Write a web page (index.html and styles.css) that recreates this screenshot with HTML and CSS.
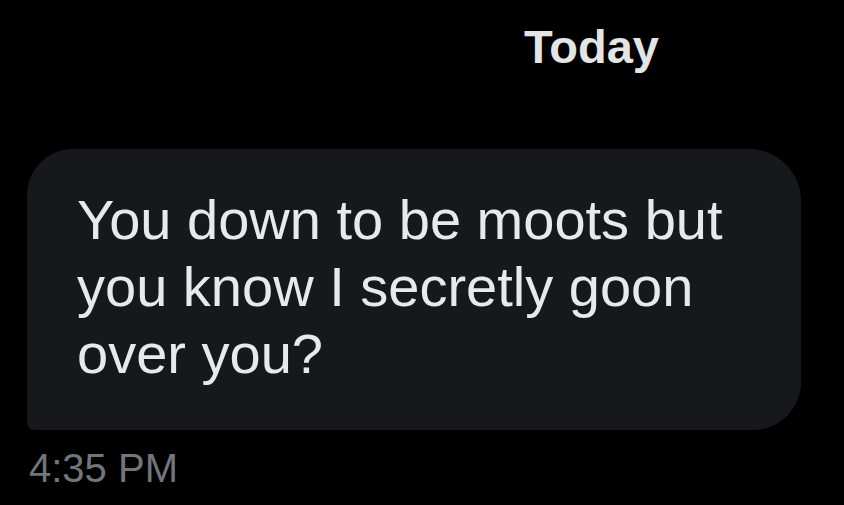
FILE: index.html
```html
<!DOCTYPE html>
<html>
<head>
<meta charset="utf-8">
<link rel="stylesheet" href="styles.css">
</head>
<body>
<div class="chat">
  <div class="day">Today</div>
  <div class="bubble">
    <p class="msg">You down to be moots but<br>you know I secretly goon<br>over you?</p>
  </div>
  <div class="time">4:35 PM</div>
</div>
</body>
</html>
```
FILE: styles.css
```css
html, body {
  margin: 0;
  padding: 0;
  background: #000;
}
body {
  width: 844px;
  height: 505px;
  overflow: hidden;
  font-family: "Liberation Sans", Arial, sans-serif;
}
.chat {
  display: flex;
  flex-direction: column;
  align-items: flex-start;
}
.day {
  margin: 23px 0 0 524px;
  font-size: 47px;
  line-height: 47px;
  font-weight: 700;
  color: #e4e4e4;
}
.bubble {
  box-sizing: border-box;
  margin: 79px 0 0 27px;
  width: 774px;
  height: 281px;
  padding: 37px 0 0 50px;
  background: #16181c;
  border-radius: 46px 52px 48px 8px;
}
.msg {
  margin: 0;
  font-size: 56px;
  line-height: 67px;
  color: #e7e9ea;
  white-space: nowrap;
}
.time {
  margin: 18px 0 0 29px;
  font-size: 40px;
  line-height: 40px;
  color: #71767b;
}
```
